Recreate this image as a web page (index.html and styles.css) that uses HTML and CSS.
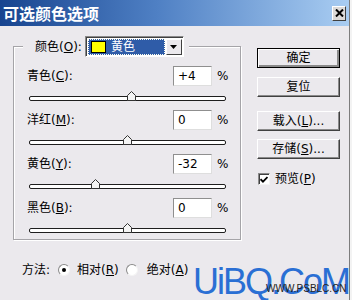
FILE: index.html
```html
<!DOCTYPE html>
<html lang="zh">
<head>
<meta charset="utf-8">
<link rel="stylesheet" href="styles.css">
</head>
<body>
<div class="window">
  <div class="titlebar">
    <span class="title">可选颜色选项</span>
    <span class="close"><svg width="9" height="8" viewBox="0 0 9 8"><path d="M1 0.5 L8 7.5 M8 0.5 L1 7.5" stroke="#000" stroke-width="2"/></svg></span>
  </div>
  <div class="content">
    <div class="left">
      <div class="group">
        <div class="legend">
          <span class="glabel">颜色(<u>O</u>):</span>
          <span class="select">
            <span class="sel-item"><span class="swatch"></span>黄色</span>
            <span class="sel-btn"><svg width="7" height="4" viewBox="0 0 7 4"><path d="M0 0 H7 L3.5 4 Z" fill="#000"/></svg></span>
          </span>
        </div>
        <div class="channel">
          <div class="field"><span class="flabel">青色(<u>C</u>):</span><span class="num">+4</span><span class="pct">%</span></div>
          <div class="slider"><div class="track"></div><svg class="thumb" style="left:100px" width="9" height="10" viewBox="0 0 9 10"><path d="M0.5 4.5 L4.5 0.5 L8.5 4.5 V9.5 H0.5 Z" fill="#f4f4f4" stroke="#333"/></svg></div>
        </div>
        <div class="channel">
          <div class="field"><span class="flabel">洋红(<u>M</u>):</span><span class="num">0</span><span class="pct">%</span></div>
          <div class="slider"><div class="track"></div><svg class="thumb" style="left:96px" width="9" height="10" viewBox="0 0 9 10"><path d="M0.5 4.5 L4.5 0.5 L8.5 4.5 V9.5 H0.5 Z" fill="#f4f4f4" stroke="#333"/></svg></div>
        </div>
        <div class="channel">
          <div class="field"><span class="flabel">黄色(<u>Y</u>):</span><span class="num">-32</span><span class="pct">%</span></div>
          <div class="slider"><div class="track"></div><svg class="thumb" style="left:64px" width="9" height="10" viewBox="0 0 9 10"><path d="M0.5 4.5 L4.5 0.5 L8.5 4.5 V9.5 H0.5 Z" fill="#f4f4f4" stroke="#333"/></svg></div>
        </div>
        <div class="channel">
          <div class="field"><span class="flabel">黑色(<u>B</u>):</span><span class="num">0</span><span class="pct">%</span></div>
          <div class="slider"><div class="track"></div><svg class="thumb" style="left:96px" width="9" height="10" viewBox="0 0 9 10"><path d="M0.5 4.5 L4.5 0.5 L8.5 4.5 V9.5 H0.5 Z" fill="#f4f4f4" stroke="#333"/></svg></div>
        </div>
      </div>
      <div class="method">
        <span class="mlabel">方法:</span>
        <span class="radio on"></span><span class="rlabel">相对(<u>R</u>)</span>
        <span class="radio second"></span><span class="rlabel">绝对(<u>A</u>)</span>
      </div>
    </div>
    <div class="right">
      <div class="btn default">确定</div>
      <div class="btn b2">复位</div>
      <div class="btn b3">载入(<u>L</u>)...</div>
      <div class="btn b4">存储(<u>S</u>)...</div>
      <div class="check-row">
        <span class="checkbox"><svg width="8" height="7" viewBox="0 0 8 7"><path d="M0.5 3.2 L3 5.7 L7.5 1" fill="none" stroke="#000" stroke-width="1.8"/></svg></span>
        <span class="clabel">预览(<u>P</u>)</span>
      </div>
    </div>
  </div>
  <div class="watermark">UiBQ.CoM</div>
  <div class="wm-small">WWW.PSBLC.CN</div>
</div>
</body>
</html>
```
FILE: styles.css
```css
* { box-sizing: border-box; }
body {
  margin: 0;
  width: 352px;
  height: 300px;
  overflow: hidden;
  background: #f3f3f3;
  font: 12px/14px "DejaVu Sans", "Noto Sans CJK SC", sans-serif;
  color: #000;
}
u { text-decoration: underline; text-underline-offset: 1px; }
.window {
  position: relative;
  width: 350px;
  height: 300px;
  border-right: 1px solid #7d7d7d;
  background: #ebe9ed;
}
.titlebar {
  height: 26px;
  background: linear-gradient(90deg, #17448f 0%, #4f80c4 45%, #a9cdf2 100%);
  display: flex;
  align-items: center;
  justify-content: space-between;
  padding: 0 3px 0 3px;
}
.title {
  color: #fff;
  font-weight: bold;
  font-size: 16px;
  line-height: 18px;
  font-family: "Noto Sans CJK SC", sans-serif;
}
.close {
  width: 14px;
  height: 15px;
  background: #dcdad8;
  border: 1px solid;
  border-color: #fff #404040 #404040 #fff;
  display: flex;
  align-items: center;
  justify-content: center;
}
.content { display: flex; }
.left { padding-left: 13px; width: 241px; }
.group {
  width: 228px;
  margin-top: 20px;
  border: 1px solid #a5a4a8;
  box-shadow: inset 1px 1px 0 #fff, 1px 1px 0 #fff;
  padding: 0 12px 6px 13px;
}
.legend {
  display: flex;
  align-items: center;
  width: fit-content;
  height: 21px;
  margin: -11px 0 0 -4px;
  padding: 0 5px 0 12px;
  background: #ebe9ed;
}
.glabel { margin-right: 3px; }
.select {
  display: flex;
  width: 99px;
  height: 21px;
  border: 1px solid;
  border-color: #8a8a8a #fff #fff #8a8a8a;
  box-shadow: inset 1px 1px 0 #404040;
  background: #fff;
  padding: 2px 1px 1px 2px;
}
.sel-item {
  flex: 1;
  display: flex;
  align-items: center;
  background: #2f5ca8;
  color: #fff;
  outline: 1px dotted #ffe;
  outline-offset: -1px;
  margin-right: 1px;
}
.swatch {
  width: 15px;
  height: 12px;
  background: #ffff00;
  border: 1px solid #000;
  margin: 0 5px 0 3px;
}
.sel-btn {
  width: 16px;
  background: #ebe9ed;
  border: 1px solid;
  border-color: #fff #404040 #404040 #fff;
  display: flex;
  align-items: center;
  justify-content: center;
}
.channel { margin-top: 9px; }
.channel:first-of-type { margin-top: 11px; }
.field {
  display: flex;
  align-items: center;
  height: 20px;
}
.flabel { flex: 1; }
.num {
  width: 39px;
  height: 20px;
  background: #fff;
  border: 1px solid;
  border-color: #8f8f8f #dedede #dedede #8f8f8f;
  padding-left: 4px;
  line-height: 18px;
}
.pct { width: 11px; margin-left: 5px; white-space: nowrap; }
.slider {
  position: relative;
  height: 10px;
  margin-top: 5px;
}
.track {
  position: relative;
  top: 5px;
  height: 5px;
  margin: 0 2px;
  border: 1px solid #1e1e1e;
  border-radius: 2px;
  background: #fff;
}
.thumb { position: absolute; top: 0; }
.method {
  display: flex;
  align-items: center;
  height: 16px;
  margin-top: 22px;
  padding-left: 9px;
}
.mlabel { margin-right: 8px; }
.radio {
  width: 12px;
  height: 12px;
  border-radius: 50%;
  border: 1px solid;
  border-color: #8a8a8a #f4f4f4 #f4f4f4 #8a8a8a;
  background: #fff;
  display: flex;
  align-items: center;
  justify-content: center;
  margin-right: 7px;
}
.radio.on::after {
  content: "";
  width: 4px;
  height: 4px;
  border-radius: 50%;
  background: #000;
}
.radio.second { margin-left: 7px; margin-right: 9px; }
.right {
  width: 83px;
  margin-left: 16px;
  padding-top: 22px;
  display: flex;
  flex-direction: column;
}
.btn {
  height: 20px;
  display: flex;
  align-items: center;
  justify-content: center;
  background: #ebe9ed;
  border: 1px solid;
  border-color: #fff #404040 #404040 #fff;
  box-shadow: inset -1px -1px 0 #8a8a8a;
}
.btn.default {
  border-color: #000;
  box-shadow: inset 1px 1px 0 #fff, inset -2px -2px 0 #8a8a8a;
}
.b2 { margin-top: 9px; }
.b3 { margin-top: 14px; }
.b4 { margin-top: 8px; }
.check-row {
  display: flex;
  align-items: center;
  height: 14px;
  margin-top: 13px;
  padding-left: 1px;
}
.checkbox {
  width: 12px;
  height: 12px;
  background: #fff;
  border: 1px solid;
  border-color: #8a8a8a #f4f4f4 #f4f4f4 #8a8a8a;
  box-shadow: inset 1px 1px 0 #404040;
  display: flex;
  align-items: center;
  justify-content: center;
  margin-right: 5px;
}
.watermark {
  position: absolute;
  left: 193px;
  top: 264px;
  font: 36px/36px "Liberation Sans", sans-serif;
  letter-spacing: -2px;
  color: #2a6fd4;
  white-space: nowrap;
}
.wm-small {
  position: absolute;
  left: 266px;
  top: 283px;
  font: 10px/12px "Liberation Sans", sans-serif;
  color: #222;
  white-space: nowrap;
}
```
